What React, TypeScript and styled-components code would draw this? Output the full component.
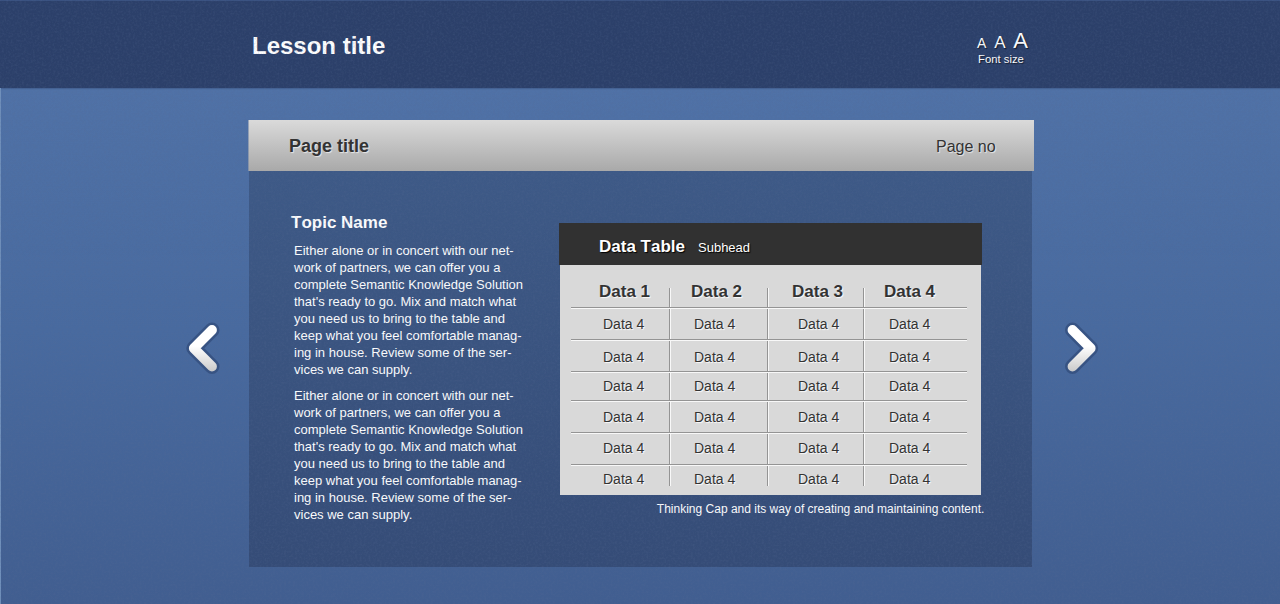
import React from "react";
import styled, { createGlobalStyle } from "styled-components";

const GlobalStyle = createGlobalStyle`
  * { box-sizing: border-box; }
  body { margin: 0; overflow: hidden; font-family: "Liberation Sans", Arial, sans-serif; color: #fff; }
  h1, h2, h3, p { margin: 0; }
  button { margin: 0; padding: 0; border: 0; background: none; color: inherit; font: inherit; cursor: pointer; }
`;

const Page = styled.div`
  position: relative;
  width: 1280px;
  height: 604px;
  display: flex;
  flex-direction: column;
  background: linear-gradient(#5072a7 88px, #486a9f 330px, #415e90 604px);
`;

const Grain = styled.svg`
  position: absolute;
  inset: 0;
  width: 100%;
  height: 100%;
  pointer-events: none;
`;

const Header = styled.header`
  height: 88px;
  padding: 0 252px 0 252px;
  display: flex;
  justify-content: space-between;
  align-items: flex-start;
  background: #2c406a;
  border-top: 1px solid #3a5281;
  box-shadow: 0 1px 1px rgba(43, 64, 105, 0.3);
`;

const LessonTitle = styled.h1`
  padding-top: 31px;
  font-size: 24px;
  line-height: 28px;
`;

const FontSizer = styled.div`
  width: 51px;
  padding-top: 29px;
  text-shadow: 1px 1px 1px rgba(0, 0, 0, 0.6);
`;

const SizeButtons = styled.div`
  display: flex;
  align-items: baseline;
  justify-content: space-between;
  height: 23px;
  line-height: 22px;
`;

const SizeButton = styled.button<{ $size: number }>`
  font-size: ${(p) => p.$size}px;
  line-height: 22px;
  text-shadow: inherit;
`;

const SizeLabel = styled.div`
  padding-left: 1px;
  font-size: 11.3px;
  line-height: 13px;
  white-space: nowrap;
`;

const Stage = styled.main`
  flex: 1;
  display: flex;
  align-items: flex-start;
  padding: 32px 0 0 182px;
  border-left: 1px solid #7090bb;
`;

const NavButton = styled.button`
  position: relative;
  z-index: 1;
  width: 40px;
  height: 60px;
  margin-top: 198px;
`;

const Lesson = styled.section`
  width: 786px;
  margin: 0 26px 0 25px;
`;

const TitleBar = styled.div`
  height: 51px;
  padding: 0 38.4px 0 40px;
  display: flex;
  justify-content: space-between;
  align-items: center;
  color: #333;
  background: linear-gradient(#dadada, #a9a9a9);
  border-left: 1px solid rgba(110, 130, 165, 0.6);
  text-shadow: 1px 1px 1px rgba(255, 255, 255, 0.65);
`;

const PageTitle = styled.h2`
  font-size: 18px;
  line-height: 20px;
`;

const PageNumber = styled.span`
  padding-top: 2px;
  font-size: 16px;
  line-height: 18px;
`;

const Content = styled.div`
  width: 783px;
  height: 396px;
  margin-left: 1px;
  display: flex;
  background: linear-gradient(#3e5a87, #354c77);
`;

const Copy = styled.article`
  width: 310px;
  padding: 42px 0 0 42px;
`;

const Topic = styled.h3`
  font-size: 17px;
  line-height: 20px;
  margin-bottom: 9px;
  font-kerning: none;
`;

const Paragraph = styled.p`
  margin: 0 0 9px 3px;
  font-size: 13px;
  line-height: 17px;
  white-space: pre-line;
`;

const Figure = styled.div`
  width: 425.4px;
  padding-top: 52px;
`;

const TableHead = styled.div`
  width: 423px;
  height: 42px;
  padding: 14px 0 0 40px;
  display: flex;
  align-items: flex-start;
  background: #313131;
  text-shadow: 1px 1px 1px #000;
`;

const TableTitle = styled.h3`
  width: 99px;
  font-size: 17px;
  line-height: 20px;
  font-kerning: none;
`;

const Subhead = styled.span`
  padding-top: 3px;
  font-size: 13px;
  line-height: 15px;
`;

const TableBody = styled.div`
  width: 421px;
  height: 230px;
  margin-left: 1px;
  padding: 23px 14px 0 11px;
  color: #333;
  background: #d9d9d9;
  text-shadow: 1px 1px 1px rgba(255, 255, 255, 0.9);
`;

const Row = styled.div<{ $height: number; $first?: boolean; $last?: boolean }>`
  height: ${(p) => p.$height}px;
  display: grid;
  grid-template-columns: 99px 98px 96px 103px;
  border-top: ${(p) => (p.$first ? "0" : "1px solid #f8f8f8")};
  border-bottom: ${(p) => (p.$last ? "0" : "1px solid #949494")};
`;

const Cell = styled.div<{ $indent: number; $top: number; $head?: boolean }>`
  height: 100%;
  min-height: 0;
  padding-left: ${(p) => p.$indent}px;
  font-size: ${(p) => (p.$head ? 17 : 14)}px;
  font-weight: ${(p) => (p.$head ? 700 : 400)};
  line-height: 16px;
  white-space: nowrap;
  border-right: 1px solid #949494;
  box-shadow: 1px 0 0 #f8f8f8;

  &:last-child { border-right: 0; box-shadow: none; }

  span { display: block; margin-top: ${(p) => p.$top}px; }
`;

const Caption = styled.p`
  padding-top: 7px;
  text-align: right;
  font-size: 12px;
  line-height: 14px;
  white-space: nowrap;
`;

const headings = ["Data 1", "Data 2", "Data 3", "Data 4"];
const headIndents = [28, 21, 24, 20];
const cellIndents = [32, 24, 30, 25];
const rows = [
  { height: 32, top: 7 },
  { height: 32, top: 8 },
  { height: 29, top: 5 },
  { height: 32, top: 7 },
  { height: 32, top: 6 },
  { height: 21, top: 5 },
];

const copy = `Either alone or in concert with our net-
work of partners, we can offer you a
complete Semantic Knowledge Solution
that's ready to go. Mix and match what
you need us to bring to the table and
keep what you feel comfortable manag-
ing in house. Review some of the ser-
vices we can supply.`;

function Chevron({ id, d }: { id: string; d: string }) {
  return (
    <svg width="40" height="60" viewBox="0 0 40 60" fill="none" strokeLinecap="round" strokeLinejoin="round">
      <defs>
        <linearGradient id={id} x1="0" y1="7" x2="0" y2="54" gradientUnits="userSpaceOnUse">
          <stop offset="0.45" stopColor="#fff" />
          <stop offset="1" stopColor="#c9c9c9" />
        </linearGradient>
      </defs>
      <path d={d} stroke="#35507f" strokeOpacity="0.85" strokeWidth="15" />
      <path d={d} stroke={`url(#${id})`} strokeWidth="9.8" />
    </svg>
  );
}

export default function App() {
  return (
    <>
      <GlobalStyle />
      <Page>
        <Header>
          <LessonTitle>Lesson title</LessonTitle>
          <FontSizer>
            <SizeButtons>
              <SizeButton $size={14}>A</SizeButton>
              <SizeButton $size={17}>A</SizeButton>
              <SizeButton $size={22}>A</SizeButton>
            </SizeButtons>
            <SizeLabel>Font size</SizeLabel>
          </FontSizer>
        </Header>
        <Stage>
          <NavButton aria-label="Previous page">
            <Chevron id="prevFill" d="M29 12 10.8 30.3 29 48.5" />
          </NavButton>
          <Lesson>
            <TitleBar>
              <PageTitle>Page title</PageTitle>
              <PageNumber>Page no</PageNumber>
            </TitleBar>
            <Content>
              <Copy>
                <Topic>Topic Name</Topic>
                <Paragraph>{copy}</Paragraph>
                <Paragraph>{copy}</Paragraph>
              </Copy>
              <Figure>
                <TableHead>
                  <TableTitle>Data Table</TableTitle>
                  <Subhead>Subhead</Subhead>
                </TableHead>
                <TableBody>
                  <Row $height={20} $first>
                    {headings.map((label, i) => (
                      <Cell key={label} $indent={headIndents[i]} $top={-4} $head>
                        <span>{label}</span>
                      </Cell>
                    ))}
                  </Row>
                  {rows.map((row, r) => (
                    <Row key={r} $height={row.height} $last={r === rows.length - 1}>
                      {cellIndents.map((indent, i) => (
                        <Cell key={i} $indent={indent} $top={row.top}>
                          <span>Data 4</span>
                        </Cell>
                      ))}
                    </Row>
                  ))}
                </TableBody>
                <Caption>Thinking Cap and its way of creating and maintaining content.</Caption>
              </Figure>
            </Content>
          </Lesson>
          <NavButton aria-label="Next page">
            <Chevron id="nextFill" d="M12.5 12 30.7 30.3 12.5 48.5" />
          </NavButton>
        </Stage>
        <Grain>
          <filter id="grain" x="0" y="0" width="100%" height="100%">
            <feTurbulence type="fractalNoise" baseFrequency="0.45" numOctaves="2" seed="4" />
            <feColorMatrix values="0 0 0 0 0.1  0 0 0 0 0.15  0 0 0 0 0.3  0.5 0 0 0 -0.2" />
          </filter>
          <path
            clipPath="url(#grainArea)"
            d="M0 0H1280V604H0Z"
            filter="url(#grain)"
            opacity="0.9"
          />
          <clipPath id="grainArea">
            <path
              clipRule="evenodd"
              d="M0 0H1280V604H0ZM248 120H1034V171H248ZM559 223H982V265H981V495H560V265H559Z"
            />
          </clipPath>
        </Grain>
      </Page>
    </>
  );
}
